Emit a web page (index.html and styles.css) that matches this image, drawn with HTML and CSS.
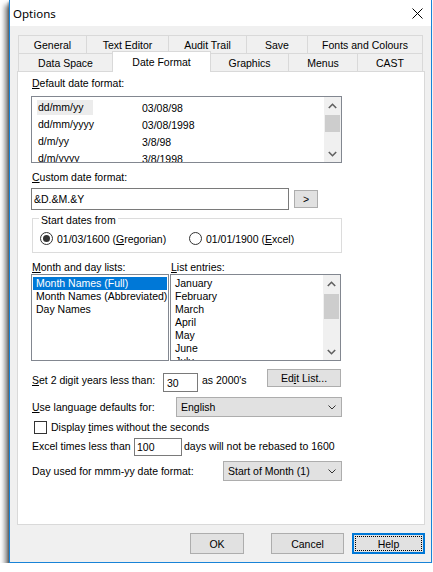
FILE: index.html
```html
<!DOCTYPE html>
<html>
<head>
<meta charset="utf-8">
<link rel="stylesheet" href="styles.css">
</head>
<body>
<div class="window">
  <div class="titlebar">
    <span class="title">Options</span>
    <svg class="close" width="11" height="11" viewBox="0 0 11 11"><path d="M0.5 0.5 L10.5 10.5 M10.5 0.5 L0.5 10.5" stroke="#000" stroke-width="1" fill="none"/></svg>
  </div>
  <div class="client">
    <div class="tabs">
      <div class="tabrow">
        <div class="tab first w69">General</div>
        <div class="tab w83">Text Editor</div>
        <div class="tab w79">Audit Trail</div>
        <div class="tab w62">Save</div>
        <div class="tab w116">Fonts and Colours</div>
      </div>
      <div class="tabrow">
        <div class="tab first w95">Data Space</div>
        <div class="tab sel w99">Date Format</div>
        <div class="tab w79">Graphics</div>
        <div class="tab w70">Menus</div>
        <div class="tab w66">CAST</div>
      </div>
    </div>
    <div class="panel">
      <div class="lbl lbl-first"><u>D</u>efault date format:</div>
      <div class="listbox lb-formats">
        <div class="lv">
          <div class="lvrow"><div class="c1"><span class="lvsel">dd/mm/yy</span></div><div class="c2">03/08/98</div></div>
          <div class="lvrow"><div class="c1"><span class="lvtxt">dd/mm/yyyy</span></div><div class="c2">03/08/1998</div></div>
          <div class="lvrow"><div class="c1"><span class="lvtxt">d/m/yy</span></div><div class="c2">3/8/98</div></div>
          <div class="lvrow"><div class="c1"><span class="lvtxt">d/m/yyyy</span></div><div class="c2">3/8/1998</div></div>
        </div>
        <div class="vscroll">
          <div class="sbtn"><svg width="9" height="6" viewBox="0 0 9 6"><polyline points="0.8,5 4.5,1.3 8.2,5" fill="none" stroke="#606060" stroke-width="1.6"/></svg></div>
          <div class="thumb th1"></div>
          <div class="sfill"></div>
          <div class="sbtn"><svg width="9" height="6" viewBox="0 0 9 6"><polyline points="0.8,1 4.5,4.7 8.2,1" fill="none" stroke="#606060" stroke-width="1.6"/></svg></div>
        </div>
      </div>
      <div class="lbl lbl-custom"><u>C</u>ustom date format:</div>
      <div class="inrow">
        <div class="edit edit-custom">&amp;D.&amp;M.&amp;Y</div>
        <div class="btn btn-arrow">&gt;</div>
      </div>
      <div class="group">
        <div class="glabel">Start dates from</div>
        <div class="radios">
          <div class="radio r-first"><span class="rcircle on"></span><span>01/03/1600 (<u>G</u>regorian)</span></div>
          <div class="radio"><span class="rcircle"></span><span>01/01/1900 (<u>E</u>xcel)</span></div>
        </div>
      </div>
      <div class="lblrow">
        <div class="lbl-col"><u>M</u>onth and day lists:</div>
        <div class="lbl-col2"><u>L</u>ist entries:</div>
      </div>
      <div class="lists">
        <div class="listbox lb-lists">
          <div class="item selitem">Month Names (Full)</div>
          <div class="item">Month Names (Abbreviated)</div>
          <div class="item">Day Names</div>
        </div>
        <div class="listbox lb-entries">
          <div class="entries">
            <div class="item">January</div>
            <div class="item">February</div>
            <div class="item">March</div>
            <div class="item">April</div>
            <div class="item">May</div>
            <div class="item">June</div>
            <div class="item">July</div>
          </div>
          <div class="vscroll">
            <div class="sbtn"><svg width="9" height="6" viewBox="0 0 9 6"><polyline points="0.8,5 4.5,1.3 8.2,5" fill="none" stroke="#606060" stroke-width="1.6"/></svg></div>
            <div class="thumb th2"></div>
            <div class="sfill"></div>
            <div class="sbtn"><svg width="9" height="6" viewBox="0 0 9 6"><polyline points="0.8,1 4.5,4.7 8.2,1" fill="none" stroke="#606060" stroke-width="1.6"/></svg></div>
          </div>
        </div>
      </div>
      <div class="row row-years">
        <div class="rl rl-years"><u>S</u>et 2 digit years less than:</div>
        <div class="edit edit-years">30</div>
        <div class="rt">as 2000's</div>
        <div class="btn btn-edit">Ed<u>i</u>t List...</div>
      </div>
      <div class="row row-lang">
        <div class="rl rl-lang"><u>U</u>se language defaults for:</div>
        <div class="combo combo-lang"><span>English</span><svg width="8" height="5" viewBox="0 0 8 5"><polyline points="0.5,0.5 4,4 7.5,0.5" fill="none" stroke="#333" stroke-width="1"/></svg></div>
      </div>
      <div class="row row-check">
        <span class="checkbox"></span>
        <span class="ct">Display <u>t</u>imes without the seconds</span>
      </div>
      <div class="row row-excel">
        <div class="rl rl-excel">Excel times less than</div>
        <div class="edit edit-excel">100</div>
        <div class="rt2">days will not be rebased to 1600</div>
      </div>
      <div class="row row-day">
        <div class="rl rl-day">Day used for mmm-yy date format:</div>
        <div class="combo combo-day"><span>Start of Month (1)</span><svg width="8" height="5" viewBox="0 0 8 5"><polyline points="0.5,0.5 4,4 7.5,0.5" fill="none" stroke="#333" stroke-width="1"/></svg></div>
      </div>
    </div>
    <div class="buttons">
      <div class="btn b-ok">OK</div>
      <div class="btn b-cancel">Cancel</div>
      <div class="btn b-help"><span class="focus">Help</span></div>
    </div>
  </div>
</div>
</body>
</html>
```
FILE: styles.css
```css
html, body {
  margin: 0;
  padding: 0;
  background: #ffffff;
}
body {
  font-family: "Liberation Sans", Arial, sans-serif;
  font-size: 10.5px;
  color: #000;
}
u { text-decoration: underline; text-underline-offset: 1px; }

.window {
  box-sizing: border-box;
  width: 423px;
  height: 563px;
  margin-left: 9px;
  border: 1px solid #1883d7;
  border-top: 0;
  background: #f0f0f0;
  box-shadow: -4px 5px 5px 0 rgba(0, 0, 0, 0.5), -1px 2px 2px 0 rgba(0, 0, 0, 0.35);
  display: flex;
  flex-direction: column;
}
.titlebar {
  height: 26px;
  background: #fff;
  display: flex;
  align-items: center;
  justify-content: space-between;
  padding: 0 8px 0 3px;
}
.title {
  font-family: "Noto Sans", "Open Sans", sans-serif;
  font-size: 11.5px;
  color: #000;
}
.close { display: block; }

.client { padding-top: 9px; }

.tabs { margin-left: 8px; width: 405px; }
.tabrow { display: flex; height: 18px; align-items: flex-start; }
.tab {
  box-sizing: border-box;
  height: 18px;
  padding-top: 1px;
  border: 1px solid #d9d9d9;
  border-bottom: 0;
  margin-left: -1px;
  display: flex;
  align-items: center;
  justify-content: center;
  background: #f0f0f0;
  white-space: nowrap;
}
.tab.first { margin-left: 0; }
.tab.sel {
  height: 21px;
  margin-top: -2px;
  padding-top: 0;
  background: #fff;
  position: relative;
  z-index: 1;
}
.w62 { width: 62px; } .w66 { width: 66px; } .w69 { width: 69px; } .w70 { width: 70px; }
.w79 { width: 79px; } .w83 { width: 83px; } .w95 { width: 95px; } .w99 { width: 99px; }
.w116 { width: 116px; }

.panel {
  box-sizing: border-box;
  width: 408px;
  height: 454px;
  margin-left: 7px;
  border: 1px solid #d9d9d9;
  background: #fff;
  padding-left: 13px;
}
.lbl { height: 13px; line-height: 13px; padding-left: 1px; white-space: nowrap; }
.lbl-first { margin-top: 5px; }
.lbl-custom { margin-top: 8px; }

.listbox {
  box-sizing: border-box;
  border: 1px solid #828790;
  background: #fff;
  overflow: hidden;
}
.lb-formats {
  margin-top: 6px;
  width: 311px;
  height: 67px;
  display: flex;
}
.lv { flex: 1; padding-top: 2px; padding-left: 5px; overflow: hidden; }
.lvrow { display: flex; height: 17px; align-items: center; white-space: nowrap; }
.c1 { width: 105px; }
.lvsel, .lvtxt {
  display: block;
  box-sizing: border-box;
  width: 56px;
  height: 15px;
  line-height: 15px;
  padding-left: 1px;
}
.lvsel { background: #ececec; }

.vscroll {
  width: 17px;
  background: #f0f0f0;
  display: flex;
  flex-direction: column;
  flex: none;
}
.sbtn { height: 17px; display: flex; align-items: center; justify-content: center; flex: none; }
.sbtn svg { display: block; }
.thumb { background: #cdcdcd; margin: 0 1px; flex: none; }
.th1 { margin-top: 1px; height: 17px; }
.th2 { margin-top: 2px; height: 25px; }
.sfill { flex: 1; }

.inrow { margin-top: 4px; height: 22px; display: flex; align-items: center; }
.edit {
  box-sizing: border-box;
  border: 1px solid #7a7a7a;
  background: #fff;
  display: flex;
  align-items: center;
  white-space: nowrap;
}
.edit-custom { width: 258px; height: 22px; padding-left: 2px; }
.btn {
  box-sizing: border-box;
  border: 1px solid #adadad;
  background: #e1e1e1;
  display: flex;
  align-items: center;
  justify-content: center;
  white-space: nowrap;
}
.btn-arrow { margin-left: 5px; width: 24px; height: 18px; }

.group {
  box-sizing: border-box;
  margin-top: 8px;
  margin-left: 1px;
  width: 310px;
  height: 35px;
  border: 1px solid #dcdcdc;
}
.glabel {
  width: fit-content;
  margin-top: -5px;
  margin-left: 6px;
  padding: 0 2px;
  height: 13px;
  line-height: 13px;
  background: #fff;
}
.radios { margin-top: 5px; height: 13px; display: flex; padding-left: 7px; }
.radio { display: flex; align-items: center; white-space: nowrap; height: 13px; }
.r-first { width: 149px; }
.rcircle {
  box-sizing: border-box;
  width: 13px;
  height: 13px;
  border: 1px solid #333;
  border-radius: 50%;
  background: #fff;
  margin-right: 4px;
  display: flex;
  align-items: center;
  justify-content: center;
  flex: none;
}
.rcircle.on::before {
  content: "";
  width: 7px;
  height: 7px;
  border-radius: 50%;
  background: #333;
}

.lblrow { margin-top: 8px; height: 13px; line-height: 13px; display: flex; white-space: nowrap; }
.lbl-col { box-sizing: border-box; width: 139px; padding-left: 1px; }
.lbl-col2 { padding-left: 1px; }

.lists { display: flex; height: 87px; }
.lb-lists { width: 138px; height: 87px; padding: 2px 1px 0 1px; }
.lb-entries { width: 171px; height: 87px; margin-left: 1px; display: flex; }
.entries { flex: 1; padding: 2px 0 0 2px; overflow: hidden; }
.item { height: 13px; line-height: 13px; white-space: nowrap; padding-left: 2px; }
.lb-lists .item { padding-left: 3px; }
.selitem { background: #0078d7; color: #fff; }

.row { display: flex; width: 311px; white-space: nowrap; }
.rl { box-sizing: border-box; padding-left: 1px; line-height: 13px; }
.row-years { margin-top: 8px; height: 23px; align-items: flex-start; }
.rl-years { width: 132px; margin-top: 5px; }
.edit-years { width: 35px; height: 19px; margin-top: 4px; padding-left: 3px; }
.rt { margin-left: 4px; margin-top: 5px; line-height: 13px; }
.btn-edit { margin-left: auto; margin-right: 1px; width: 74px; height: 18px; }

.row-lang { margin-top: 5px; height: 20px; align-items: center; }
.rl-lang { width: 145px; }
.combo {
  box-sizing: border-box;
  height: 20px;
  border: 1px solid #adadad;
  background: #e1e1e1;
  display: flex;
  align-items: center;
  justify-content: space-between;
  padding: 0 5px 0 4px;
}
.combo svg { display: block; }
.combo-lang { width: 166px; }

.row-check { margin-top: 4px; height: 13px; align-items: center; }
.checkbox {
  box-sizing: border-box;
  width: 13px;
  height: 13px;
  border: 1px solid #333;
  background: #fff;
  margin-left: 3px;
  flex: none;
}
.ct { margin-left: 4px; line-height: 13px; }

.row-excel { margin-top: 3px; height: 19px; align-items: center; }
.rl-excel { width: 103px; }
.edit-excel { width: 48px; height: 18px; padding-left: 2px; }
.rt2 { margin-left: 2px; line-height: 13px; }

.row-day { margin-top: 5px; height: 20px; align-items: center; }
.rl-day { width: 192px; }
.combo-day { width: 119px; }

.buttons {
  display: flex;
  justify-content: flex-end;
  margin-top: 8px;
  padding-right: 6px;
  height: 21px;
}
.buttons .btn { height: 21px; }
.b-ok { width: 54px; }
.b-cancel { width: 73px; margin-left: 27px; }
.b-help {
  width: 73px;
  margin-left: 8px;
  border: 1px solid #0078d7;
  box-shadow: inset 0 0 0 1px #0078d7;
  padding: 2px;
}
.focus {
  box-sizing: border-box;
  width: 100%;
  height: 100%;
  border: 1px dotted #000;
  display: flex;
  align-items: center;
  justify-content: center;
}
```
